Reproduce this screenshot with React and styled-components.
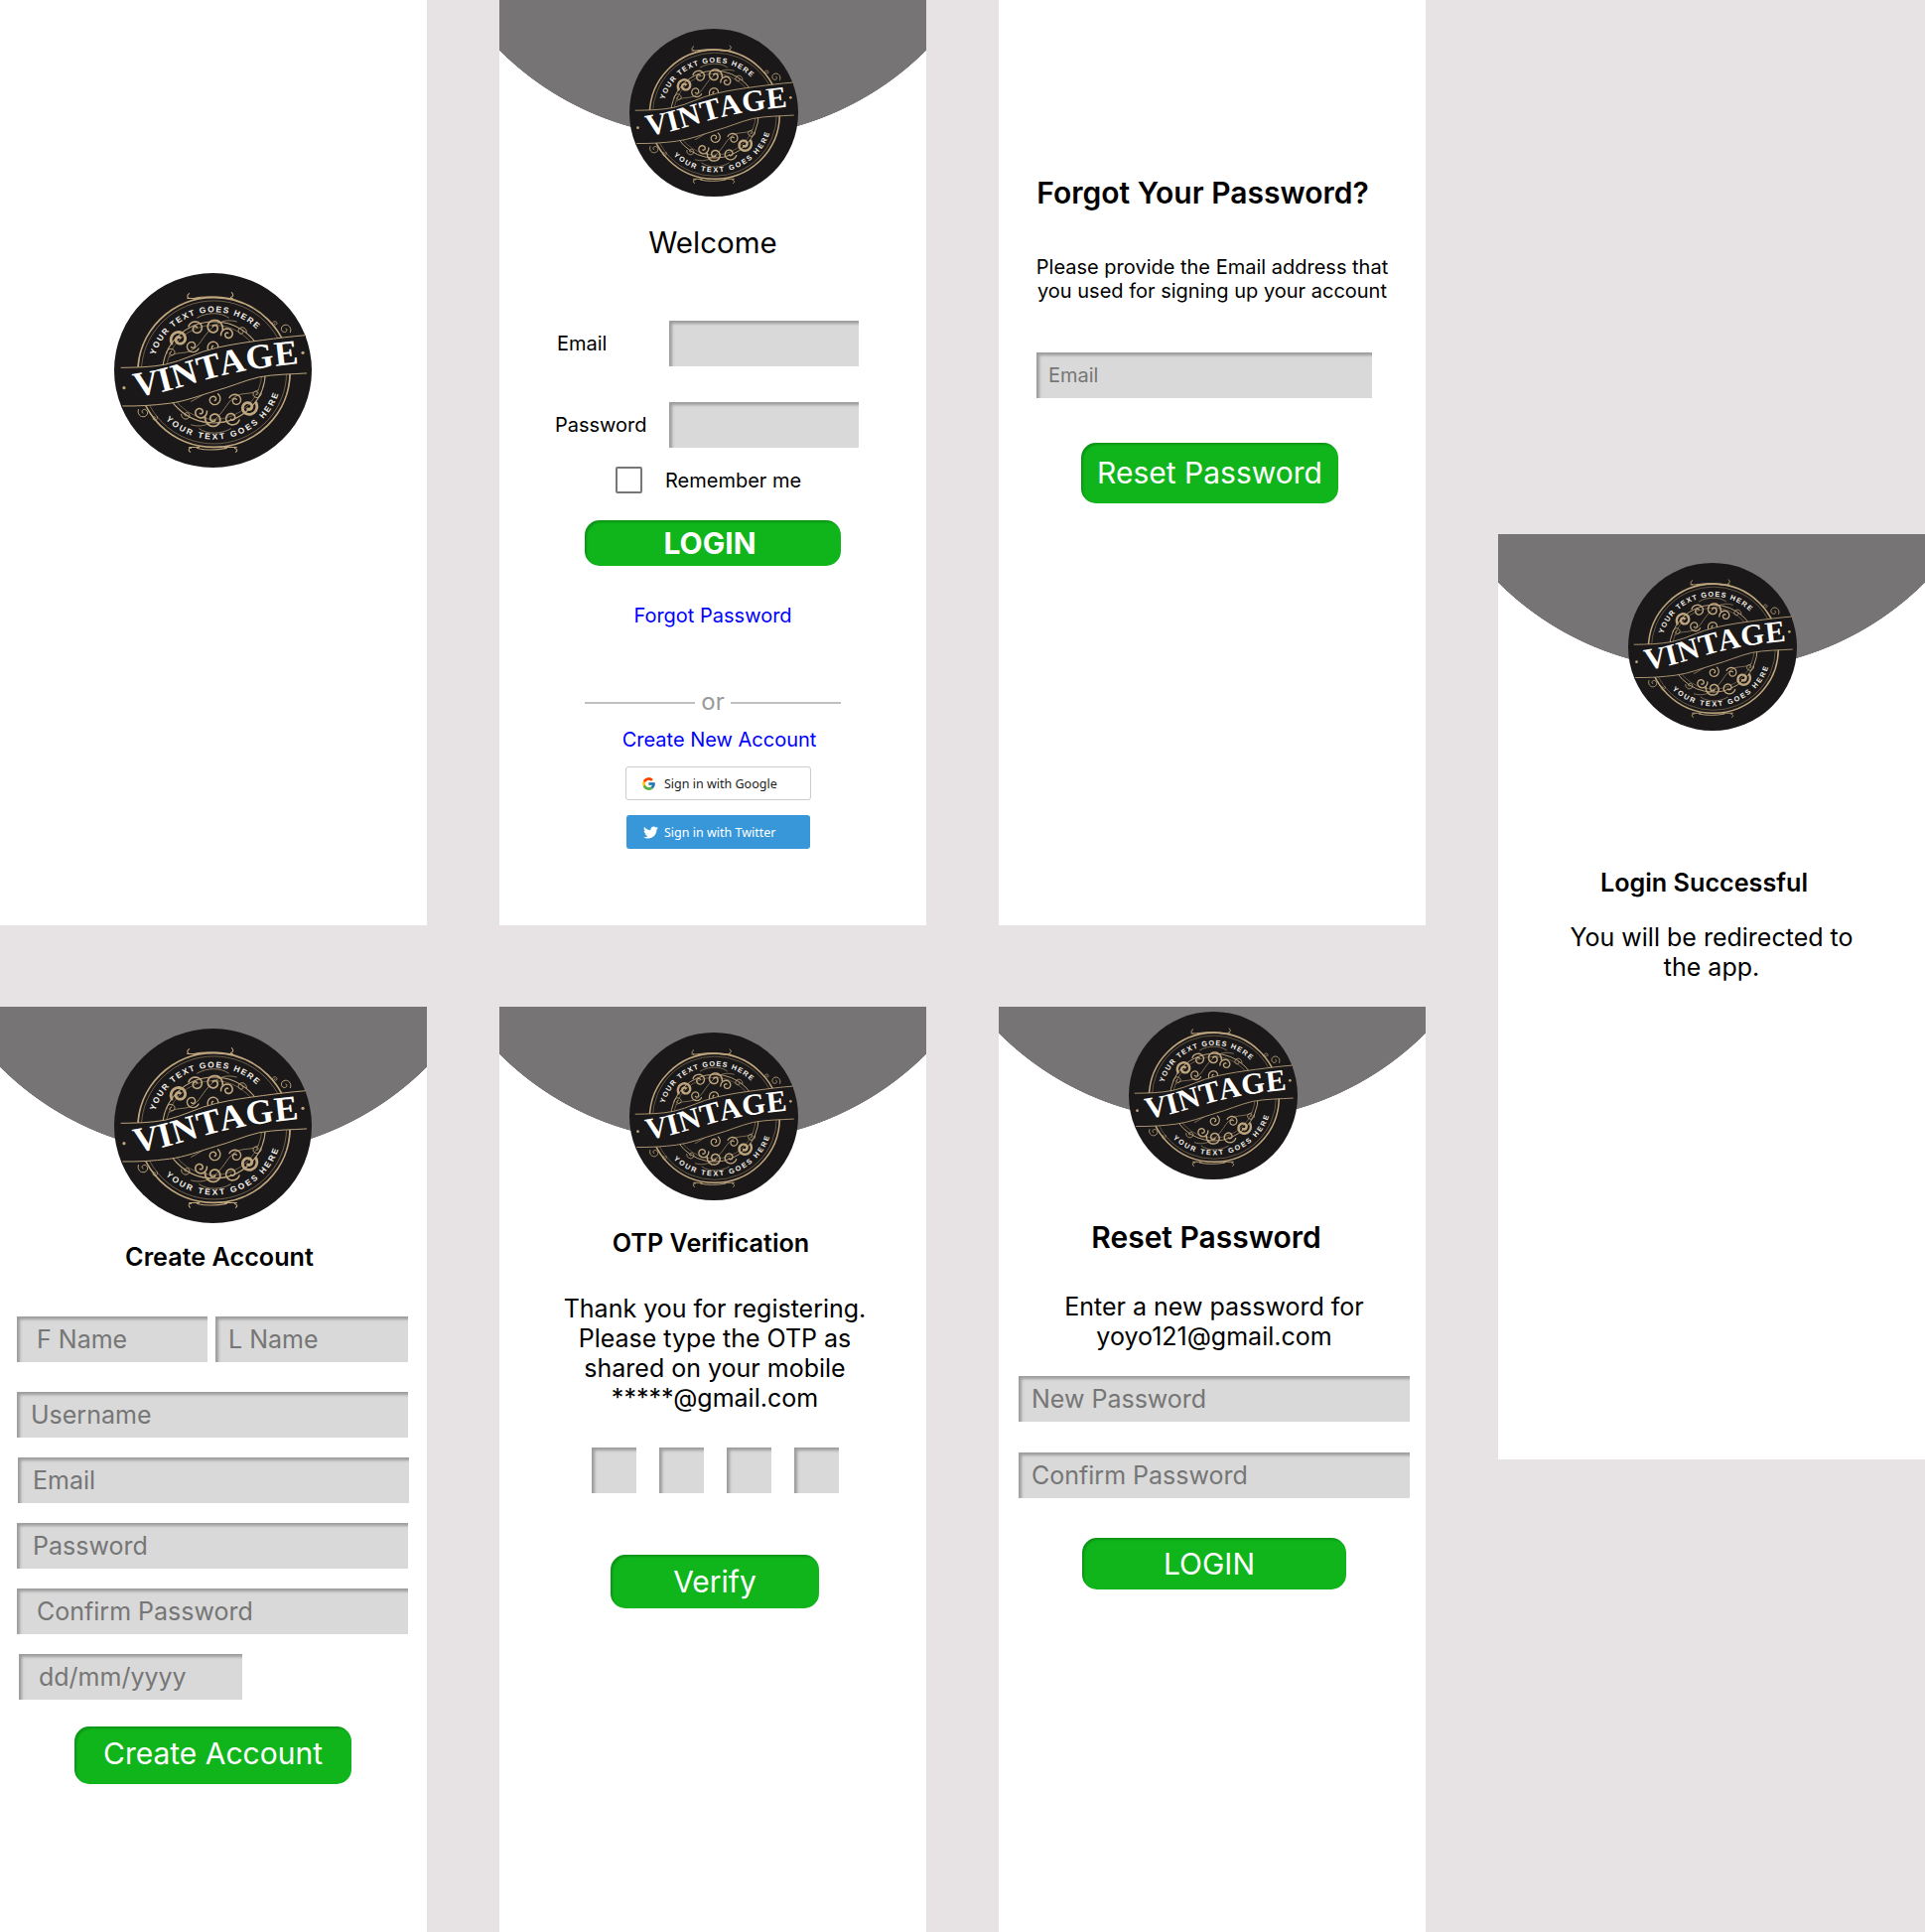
import { useId } from "react"
import styled, { createGlobalStyle, css } from "styled-components"
import { FcGoogle } from "react-icons/fc"
import { FaTwitter } from "react-icons/fa"

const GlobalStyle = createGlobalStyle`
  html, body {
    margin: 0;
    padding: 0;
    background: #e7e3e4;
    font-family: Inter, "Liberation Sans", sans-serif;
  }
  * { box-sizing: border-box; }
`

const TAN = "#bfa67f"
const INK = "#1a1818"

// curl used for the scrollwork in the emblem
const spiral = (cx, cy, r, turns, start, dir) => {
  const pts = []
  const steps = Math.round(turns * 24)
  for (let i = 0; i <= steps; i++) {
    const t = i / steps
    const a = start + dir * t * turns * Math.PI * 2
    const rad = r * (1 - t * 0.8)
    pts.push(`${(cx + rad * Math.cos(a)).toFixed(1)} ${(cy + rad * Math.sin(a)).toFixed(1)}`)
  }
  return "M" + pts.join("L")
}

const curls = [
  [66, 68, 9, 1.4, 2.6, 1, 2.8],
  [83, 57, 8, 1.3, 3.4, 1, 1.6],
  [101, 56, 9, 1.4, 0.2, -1, 1.8],
  [115, 63, 7, 1.3, 3.0, 1, 1.6],
  [101, 76, 7, 1.3, 2.2, 1, 1.4],
  [79, 75, 7, 1.3, 0.4, 1, 1.4],
  [129, 60, 5, 1.2, 0.2, -1, 1],
  [58, 82, 5, 1.2, 3.0, 1, 1],
]

const Logo = ({ w, h, top, shift }) => {
  const id = useId().replace(/[^a-zA-Z0-9]/g, "")
  return (
    <Emblem $w={w} $h={h} $top={top} $shift={shift} viewBox="0 0 200 200" preserveAspectRatio="none">
      <defs>
        <path id={`${id}top`} d="M41.6 84.4A62 62 0 0 1 146 59.5" />
        <path id={`${id}bot`} d="M52.2 150.8A69 69 0 0 0 167 122.2" />
        <path id={`${id}ban`} d="M21 127C50 124 70 116 99 108C130 100 155 96 198 92" />
      </defs>
      <circle cx="100" cy="100" r="100" fill={INK} />
      <circle cx="101" cy="102" r="77" fill="none" stroke={TAN} strokeWidth="1.8" />
      <circle cx="101" cy="102" r="73.5" fill="none" stroke={TAN} strokeWidth="0.5" />
      <circle cx="101" cy="102" r="52" fill="none" stroke={TAN} strokeWidth="1.1" />
      <circle cx="101" cy="102" r="48.5" fill="none" stroke={TAN} strokeWidth="0.5" />
      <g fill="none" stroke={TAN} strokeLinecap="round">
        <path d="M76 21c-3 2-2 4 0 5M74 26h12M81 26c8-2 22-2 32 0M108 26h12M118 25c3-1 3-3 1-5" strokeWidth="1.1" />
        <path d="M78 180c-3-1-3 3-1 4M76 179h10M84 180c8 2 20 2 30 0M112 179h12M122 180c3 1 3 3 1 4" strokeWidth="1.1" />
        <path d={spiral(173, 58, 6, 1.2, 0.5, -1)} strokeWidth="1" />
        <path d={spiral(163, 52, 3, 1.1, 2.6, 1)} strokeWidth="0.8" />
        <path d={spiral(30, 143, 6, 1.2, 3.6, -1)} strokeWidth="1" />
        <path d={spiral(41, 149, 3, 1.1, 5.6, 1)} strokeWidth="0.8" />
        {curls.map(([cx, cy, r, turns, start, dir, sw], i) => (
          <path key={i} d={spiral(cx, cy, r, turns, start, dir)} strokeWidth={sw} />
        ))}
        <path d="M56 86C66 78 76 88 88 70S110 46 124 50M84 46c10-6 24-6 32 0M92 88c10 2 20-8 32-14" strokeWidth="0.7" />
        <g transform="rotate(180 101 103)">
          {curls.map(([cx, cy, r, turns, start, dir, sw], i) => (
            <path key={i} d={spiral(cx, cy, r, turns, start, dir)} strokeWidth={sw} />
          ))}
          <path d="M56 86C66 78 76 88 88 70S110 46 124 50M84 46c10-6 24-6 32 0M92 88c10 2 20-8 32-14" strokeWidth="0.7" />
        </g>
      </g>
      <RingText $spacing={1.4}>
        <textPath href={`#${id}top`}>YOUR TEXT GOES HERE</textPath>
      </RingText>
      <RingText $spacing={2.1}>
        <textPath href={`#${id}bot`}>YOUR TEXT GOES HERE</textPath>
      </RingText>
      <path
        d="M6.7 97.3C22 97 36 97 52 94C70 90 85 81 103 77C120 73 135 71 150 69C165 67 180 65 194 64L195 103C180 104 162 104 146.5 107C130 111 118 117 103 121C86 126 72 132 55.5 134C40 136 24 137 8.4 136.7Z"
        fill={INK}
      />
      <g fill="none" stroke={TAN} strokeWidth="1">
        <path d="M6.7 97.3C22 97 36 97 52 94C70 90 85 81 103 77C120 73 135 71 150 69C165 67 180 65 194 64" />
        <path d="M8.4 136.7C24 137 40 136 55.5 134C72 132 86 126 103 121C118 117 130 111 146.5 107C162 104 180 104 195 103" />
      </g>
      <circle cx="10" cy="118" r="1.6" fill={TAN} />
      <circle cx="191" cy="82" r="1.6" fill={TAN} />
      <BannerText>
        <textPath href={`#${id}ban`}>VINTAGE</textPath>
      </BannerText>
    </Emblem>
  )
}

const App = () => {
  return (
    <>
      <GlobalStyle />
      <Page>
        <Frame>
          <Logo w={199} h={196} top={275} shift={-0.5} />
        </Frame>

        <Frame $cap={-152.5}>
          <Logo w={170} h={169} top={29} shift={1} />
          <Welcome $top={28}>Welcome</Welcome>
          <LabelRow $top={61} $shift={-6}>
            <FieldLabel $pad={2}>Email</FieldLabel>
            <Field $w={191} />
          </LabelRow>
          <LabelRow $top={36} $shift={-6}>
            <FieldLabel>Password</FieldLabel>
            <Field $w={191} />
          </LabelRow>
          <RememberRow $top={19} $shift={-4.5}>
            <Checkbox />
            <FieldLabel>Remember me</FieldLabel>
          </RememberRow>
          <GreenButton $top={27} $w={258} $h={46} $bold $nudge={6}>LOGIN</GreenButton>
          <TextLink $top={38}>Forgot Password</TextLink>
          <OrDivider $top={62}>
            <OrLine />
            <OrText>or</OrText>
            <OrLine />
          </OrDivider>
          <TextLink $top={11} $shift={6.5}>Create New Account</TextLink>
          <SocialButton $top={15} $w={187} $shift={5.5}>
            <FcGoogle size={15} />
            Sign in with Google
          </SocialButton>
          <SocialButton $top={15} $w={185} $shift={5.5} $twitter>
            <FaTwitter size={15} />
            Sign in with Twitter
          </SocialButton>
        </Frame>

        <Frame>
          <Title $top={176} $shift={-9.5} $size={30}>Forgot Your Password?</Title>
          <SmallCopy $top={45}>
            Please provide the Email address that
            <br />
            you used for signing up your account
          </SmallCopy>
          <Field $top={50} $w={338} $shift={-8} $small $pad={12}>Email</Field>
          <GreenButton $top={45} $w={259} $h={61} $shift={-2.5} $lift={1}>Reset Password</GreenButton>
        </Frame>

        <SuccessFrame $cap={-154.5}>
          <Logo w={170} h={169} top={29} shift={1} />
          <Title $top={138} $shift={-7.5}>Login Successful</Title>
          <Copy $top={25}>
            You will be redirected to
            <br />
            the app.
          </Copy>
        </SuccessFrame>

        <Frame $cap={-142.5}>
          <Logo w={199} h={196} top={22} shift={-0.5} />
          <Title $top={19} $shift={6}>Create Account</Title>
          <NameRow $top={45} $shift={-1}>
            <Field $w={192} $pad={20}>F Name</Field>
            <Field $w={194} $pad={13}>L Name</Field>
          </NameRow>
          <Field $top={30} $w={394} $shift={-1} $pad={14}>Username</Field>
          <Field $top={20} $w={394} $pad={15}>Email</Field>
          <Field $top={20} $w={394} $shift={-1} $pad={16}>Password</Field>
          <Field $top={20} $w={394} $shift={-1} $pad={20}>Confirm Password</Field>
          <Field $top={20} $w={225} $shift={-83.5} $pad={20}>dd/mm/yyyy</Field>
          <GreenButton $top={27} $w={279} $h={58} $shift={-0.5} $lift={5}>Create Account</GreenButton>
        </Frame>

        <Frame $cap={-155.5}>
          <Logo w={170} h={169} top={26} shift={1} />
          <Title $top={28} $shift={-2}>OTP Verification</Title>
          <Copy $top={36} $shift={2}>
            Thank you for registering.
            <br />
            Please type the OTP as
            <br />
            shared on your mobile
            <br />
            *****@gmail.com
          </Copy>
          <OtpRow $top={35} $shift={2.5}>
            <Field $w={45} />
            <Field $w={45} />
            <Field $w={45} />
            <Field $w={45} />
          </OtpRow>
          <GreenButton $top={62} $w={210} $h={54} $shift={2} $lift={1}>Verify</GreenButton>
        </Frame>

        <Frame $cap={-176.5}>
          <Logo w={170} h={169} top={5} shift={1} />
          <Title $top={40} $shift={-6} $size={30}>Reset Password</Title>
          <Copy $top={37} $shift={2}>
            Enter a new password for
            <br />
            yoyo121@gmail.com
          </Copy>
          <Field $top={25} $w={394} $shift={2} $pad={13}>New Password</Field>
          <Field $top={31} $w={394} $shift={2} $pad={13}>Confirm Password</Field>
          <GreenButton $top={40} $w={266} $h={52} $shift={2} $nudge={10}>LOGIN</GreenButton>
        </Frame>
      </Page>
    </>
  )
}

// frames are centred columns, every item says how far it sits below the last one
// and how far off the centre line it is
const placed = css`
  margin-top: ${(p) => p.$top || 0}px;
  margin-left: ${(p) => (p.$shift || 0) * 2}px;
  flex-shrink: 0;
`

const Page = styled.div`
  width: 1939px;
  height: 1946px;
  display: grid;
  grid-template-columns: repeat(4, 430px);
  grid-template-rows: 932px 932px;
  column-gap: 73px;
  row-gap: 82px;
  overflow: hidden;
`

const Frame = styled.section`
  height: 932px;
  display: flex;
  flex-direction: column;
  align-items: center;
  overflow: hidden;
  background: ${(p) =>
    p.$cap !== undefined
      ? `radial-gradient(300px 292px at 50% ${p.$cap}px, #767475 99.8%, #fff 100%)`
      : "#fff"};
`

const SuccessFrame = styled(Frame)`
  grid-column: 4;
  grid-row: 1 / span 2;
  margin-top: 538px;
`

const Emblem = styled.svg`
  ${placed}
  display: block;
  width: ${(p) => p.$w}px;
  height: ${(p) => p.$h}px;
`

const RingText = styled.text`
  font-family: "Liberation Sans", sans-serif;
  font-weight: 700;
  font-size: 8.5px;
  letter-spacing: ${(p) => p.$spacing}px;
  fill: #f2efe9;
`

const BannerText = styled.text`
  font-family: "Liberation Serif", serif;
  font-weight: 700;
  font-size: 36px;
  letter-spacing: 0.8px;
  fill: #fff;
`

const Welcome = styled.h1`
  ${placed}
  margin-bottom: 0;
  font-size: 29.5px;
  line-height: 36px;
  font-weight: 400;
  color: #000;
`

const Title = styled.h2`
  ${placed}
  margin-bottom: 0;
  font-size: ${(p) => p.$size || 25.2}px;
  line-height: ${(p) => (p.$size ? 36 : 30)}px;
  font-weight: 600;
  color: #000;
  white-space: nowrap;
`

const Copy = styled.p`
  ${placed}
  margin-bottom: 0;
  font-size: 25px;
  line-height: 30px;
  text-align: center;
  color: #000;
  white-space: nowrap;
`

const SmallCopy = styled(Copy)`
  font-size: 20px;
  line-height: 24px;
`

const Field = styled.div`
  ${placed}
  width: ${(p) => p.$w}px;
  height: 46px;
  padding-left: ${(p) => p.$pad || 0}px;
  display: flex;
  align-items: center;
  background: #d9d9d9;
  box-shadow: inset 3px 3px 3px rgba(0, 0, 0, 0.28);
  color: #767676;
  font-size: ${(p) => (p.$small ? 20 : 25)}px;
  white-space: nowrap;
`

const LabelRow = styled.div`
  ${placed}
  width: 306px;
  height: 46px;
  display: flex;
  align-items: center;
  justify-content: space-between;
`

const FieldLabel = styled.span`
  padding-left: ${(p) => p.$pad || 0}px;
  font-size: 20px;
  line-height: 24px;
  color: #000;
  white-space: nowrap;
`

const RememberRow = styled.div`
  ${placed}
  width: 187px;
  display: flex;
  align-items: center;
  gap: 23px;
`

const Checkbox = styled.span`
  width: 27px;
  height: 27px;
  border: 2px solid #777;
  border-radius: 2px;
  flex-shrink: 0;
`

const GreenButton = styled.button`
  ${placed}
  width: ${(p) => p.$w}px;
  height: ${(p) => p.$h}px;
  padding: 0 ${(p) => p.$nudge || 0}px ${(p) => p.$lift || 0}px 0;
  border: none;
  border-radius: 15px;
  background: #0fb51b;
  box-shadow: inset 2px 2px 2px rgba(0, 0, 0, 0.18);
  color: #fff;
  font-family: inherit;
  font-size: 30px;
  font-weight: ${(p) => (p.$bold ? 700 : 400)};
`

const TextLink = styled.a`
  ${placed}
  font-size: 20px;
  line-height: 24px;
  color: #0000ff;
`

const OrDivider = styled.div`
  ${placed}
  width: 258px;
  height: 28px;
  display: flex;
  align-items: center;
  gap: 6px;
`

const OrLine = styled.span`
  flex: 1;
  height: 2px;
  background: #c0c0c0;
`

const OrText = styled.span`
  font-size: 24px;
  line-height: 28px;
  color: #999;
  margin-top: -3px;
`

const SocialButton = styled.div`
  ${placed}
  width: ${(p) => p.$w}px;
  height: 34px;
  padding-left: ${(p) => (p.$twitter ? 17 : 15)}px;
  display: flex;
  align-items: center;
  gap: ${(p) => (p.$twitter ? 6 : 8)}px;
  border-radius: 3px;
  border: ${(p) => (p.$twitter ? "none" : "1px solid #ccc")};
  background: ${(p) => (p.$twitter ? "#3897d9" : "#fff")};
  color: ${(p) => (p.$twitter ? "#fff" : "#1c1c1c")};
  font-family: "Noto Sans", sans-serif;
  font-size: 12.5px;
  white-space: nowrap;
`

const NameRow = styled.div`
  ${placed}
  display: flex;
  gap: 8px;
`

const OtpRow = styled.div`
  ${placed}
  display: flex;
  gap: 23px;
`

export default App
